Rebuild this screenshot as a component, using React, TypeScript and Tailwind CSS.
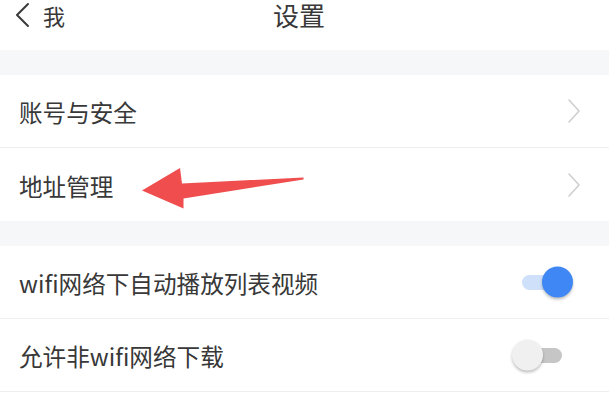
import React from "react";

const font = { fontFamily: '"Noto Sans CJK SC", "Noto Sans", sans-serif' };

function Chevron() {
  return (
    <svg width="16" height="26" viewBox="0 0 16 26" className="shrink-0">
      <path d="M3 2 L13 13 L3 24" fill="none" stroke="#cfcfcf" strokeWidth="1.6" strokeLinecap="round" strokeLinejoin="round" />
    </svg>
  );
}

function Toggle({ on }: { on: boolean }) {
  return (
    <div className="relative w-[40px] h-[15px] mr-[47px]">
      <div className={on ? "absolute inset-0 rounded-full bg-[#cfe0fb]" : "absolute inset-0 rounded-full bg-[#c6c6c6]"} />
      <div
        className={
          on
            ? "absolute top-1/2 -translate-y-1/2 left-[20px] w-[31px] h-[31px] rounded-full bg-[#3f87f4] shadow-[0_2px_3px_rgba(0,0,0,0.25)]"
            : "absolute top-1/2 -translate-y-1/2 left-[-10px] w-[31px] h-[31px] rounded-full bg-[#f0f0f0] shadow-[0_2px_3px_rgba(0,0,0,0.25)]"
        }
      />
    </div>
  );
}

function Row({ label, right, border }: { label: string; right: React.ReactNode; border?: boolean }) {
  return (
    <div className={border ? "flex items-center justify-between h-[73px] pl-[19px] border-b border-[#eeeeee] bg-white" : "flex items-center justify-between h-[73px] pl-[19px] bg-white"}>
      <span className="text-[23.6px] text-[#383838] leading-[30px] pt-[2px]">{label}</span>
      {right}
    </div>
  );
}

export default function App() {
  return (
    <div className="relative w-[609px] h-[408px] bg-white overflow-hidden" style={font}>
      <div className="relative flex items-start h-[50px]">
        <div className="flex items-center h-[30px] pl-[14px]">
          <svg width="18" height="26" viewBox="0 0 18 26">
            <path d="M14 2 L3 13 L14 24" fill="none" stroke="#3a3a3a" strokeWidth="2" strokeLinecap="round" strokeLinejoin="round" />
          </svg>
          <span className="ml-[11px] text-[22px] leading-[30px] text-[#383838]">我</span>
        </div>
        <div className="absolute left-0 right-0 top-0 flex justify-center h-[30px] items-center">
          <span className="text-[26px] leading-[30px] text-[#383838] ml-[-11px]">设置</span>
        </div>
      </div>
      <div className="h-[25px] bg-[#f6f7f9]" />
      <Row label="账号与安全" border right={<div className="mr-[27px] flex"><Chevron /></div>} />
      <Row label="地址管理" right={<div className="mr-[27px] flex"><Chevron /></div>} />
      <div className="h-[25px] bg-[#f6f7f9]" />
      <Row label="wifi网络下自动播放列表视频" border right={<Toggle on />} />
      <Row label="允许非wifi网络下载" border right={<Toggle on={false} />} />

      <svg className="absolute left-0 top-0 pointer-events-none" width="609" height="408" viewBox="0 0 609 408">
        <polygon
          points="142,190.5 180,168 182,183.5 303.5,177.5 303.5,179.5 183.5,198.5 183.5,208.5"
          fill="#f04e4e"
        />
      </svg>
    </div>
  );
}
